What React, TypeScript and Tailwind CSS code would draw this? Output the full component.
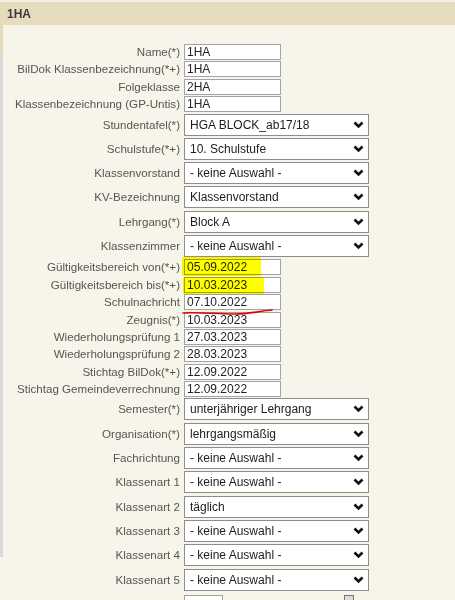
import React from "react";

type Row =
  | { kind: "input"; label: string; value: string }
  | { kind: "select"; label: string; value: string };

const rowsTop: Row[] = [
  { kind: "input", label: "Name(*)", value: "1HA" },
  { kind: "input", label: "BilDok Klassenbezeichnung(*+)", value: "1HA" },
  { kind: "input", label: "Folgeklasse", value: "2HA" },
  { kind: "input", label: "Klassenbezeichnung (GP-Untis)", value: "1HA" },
  { kind: "select", label: "Stundentafel(*)", value: "HGA BLOCK_ab17/18" },
  { kind: "select", label: "Schulstufe(*+)", value: "10. Schulstufe" },
  { kind: "select", label: "Klassenvorstand", value: "- keine Auswahl -" },
  { kind: "select", label: "KV-Bezeichnung", value: "Klassenvorstand" },
  { kind: "select", label: "Lehrgang(*)", value: "Block A" },
  { kind: "select", label: "Klassenzimmer", value: "- keine Auswahl -" },
  { kind: "input", label: "Gültigkeitsbereich von(*+)", value: "05.09.2022" },
  { kind: "input", label: "Gültigkeitsbereich bis(*+)", value: "10.03.2023" },
  { kind: "input", label: "Schulnachricht", value: "07.10.2022" },
  { kind: "input", label: "Zeugnis(*)", value: "10.03.2023" },
  { kind: "input", label: "Wiederholungsprüfung 1", value: "27.03.2023" },
  { kind: "input", label: "Wiederholungsprüfung 2", value: "28.03.2023" },
  { kind: "input", label: "Stichtag BilDok(*+)", value: "12.09.2022" },
  { kind: "input", label: "Stichtag Gemeindeverrechnung", value: "12.09.2022" },
  { kind: "select", label: "Semester(*)", value: "unterjähriger Lehrgang" },
  { kind: "select", label: "Organisation(*)", value: "lehrgangsmäßig" },
  { kind: "select", label: "Fachrichtung", value: "- keine Auswahl -" },
  { kind: "select", label: "Klassenart 1", value: "- keine Auswahl -" },
  { kind: "select", label: "Klassenart 2", value: "täglich" },
  { kind: "select", label: "Klassenart 3", value: "- keine Auswahl -" },
  { kind: "select", label: "Klassenart 4", value: "- keine Auswahl -" },
  { kind: "select", label: "Klassenart 5", value: "- keine Auswahl -" },
];

const Chevron = () => (
  <svg width="11" height="8" viewBox="0 0 11 8" className="shrink-0">
    <polyline points="1.5,1.5 5.5,5.5 9.5,1.5" fill="none" stroke="#111" strokeWidth="2.6" />
  </svg>
);

const FormRow = ({ row }: { row: Row }) => {
  if (row.kind === "input") {
    return (
      <div className="flex h-[17.4px] items-start">
        <div className="w-[178px] shrink-0 pr-[1px] text-right leading-4 text-[#555]">{row.label}</div>
        <div className="ml-[3px] flex h-4 w-[97px] items-center border border-[#a3a3a3] bg-white pl-[2px] text-[12px] text-[#222]">
          {row.value}
        </div>
      </div>
    );
  }
  return (
    <div className="flex h-[24.3px] items-start">
      <div className="w-[178px] shrink-0 pr-[1px] text-right leading-[22px] text-[#555]">{row.label}</div>
      <div className="ml-[3px] flex h-[22px] w-[185px] items-center justify-between border border-[#8d8d8d] bg-white pl-[5px] pr-[4px] text-[12px] text-[#1c1c1c]">
        <span>{row.value}</span>
        <Chevron />
      </div>
    </div>
  );
};

export default function App() {
  return (
    <div className="relative h-[600px] w-[455px] overflow-hidden bg-[#f7f4e9] text-[11.6px] font-['Liberation_Sans',Arial,sans-serif]">
      <div className="h-[2px] bg-[#f4f0e4]" />
      <div className="flex h-[23px] items-center bg-[#e6dcbd] pl-[7px] text-[12px] font-bold text-[#3a3a3a]">1HA</div>
      <div className="flex">
        <div className="flex w-[3px] shrink-0 flex-col">
          <div className="h-[27px] bg-[#e6dcbd]" />
          <div className="h-[505px] bg-[#d9d9d9]" />
        </div>
        <div className="flex-1 pt-[19px]">
          {rowsTop.map((r) => (
            <FormRow key={r.label} row={r} />
          ))}
          <div className="flex h-[17px] items-start pt-[2px]">
            <div className="w-[178px] shrink-0" />
            <div className="ml-[3px] h-4 w-[39px] border border-[#a3a3a3] bg-white" />
            <div className="ml-[121px] h-3 w-[10px] border border-[#777] bg-[#ddd]" />
          </div>
        </div>
      </div>

      {/* marker highlights and red underline drawn over the form */}
      <div className="pointer-events-none absolute left-[182px] top-[257px] h-[19px] w-[79px] rounded-[2px] bg-[#ffff00] mix-blend-multiply" />
      <div className="pointer-events-none absolute left-[183px] top-[277px] h-[17px] w-[81px] rounded-[2px] bg-[#ffff00] mix-blend-multiply" />
      <svg className="pointer-events-none absolute left-[180px] top-[305px]" width="96" height="14" viewBox="0 0 96 14">
        <path d="M3 8 C 20 7, 35 9, 55 9 C 70 9, 80 6, 92 5" fill="none" stroke="#e10000" strokeWidth="1.6" strokeLinecap="round" />
      </svg>
    </div>
  );
}
